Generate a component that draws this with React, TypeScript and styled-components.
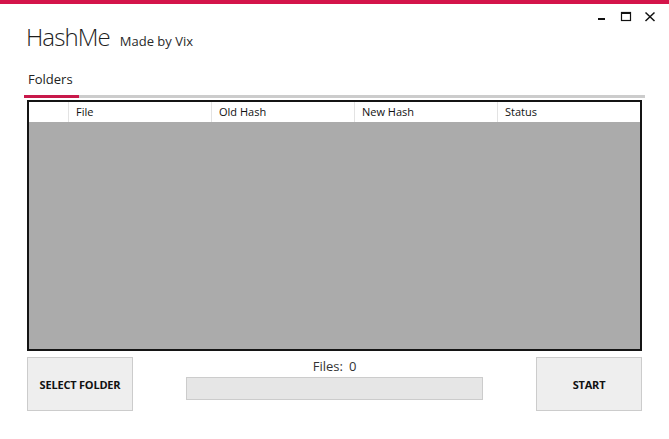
import styled, { createGlobalStyle } from 'styled-components';

const GlobalStyle = createGlobalStyle`
  html, body {
    margin: 0;
    padding: 0;
    background: #ffffff;
  }

  body {
    font-family: "Open Sans", "Noto Sans", sans-serif;
    color: #1b1b1b;
  }
`;

const columns = ['File', 'Old Hash', 'New Hash', 'Status'];

export default function App() {
    return (
        <>
            <GlobalStyle />
            <Window>
                <Header>
                    <TitleGroup>
                        <Title>HashMe</Title>
                        <Subtitle>Made by Vix</Subtitle>
                    </TitleGroup>

                    <Controls>
                        <ControlButton aria-label="minimize">
                            <svg width="12" height="12" viewBox="0 0 12 12">
                                <rect x="2" y="7" width="7" height="2" fill="#111" />
                            </svg>
                        </ControlButton>
                        <ControlButton aria-label="maximize">
                            <svg width="12" height="12" viewBox="0 0 12 12">
                                <rect x="1.5" y="1.5" width="9" height="8" fill="none" stroke="#111" strokeWidth="1.2" />
                                <rect x="1" y="1" width="10" height="2" fill="#111" />
                            </svg>
                        </ControlButton>
                        <ControlButton aria-label="close">
                            <svg width="12" height="12" viewBox="0 0 12 12">
                                <path d="M1.5 1.5 L10.5 10 M10.5 1.5 L1.5 10" stroke="#111" strokeWidth="1.5" />
                            </svg>
                        </ControlButton>
                    </Controls>
                </Header>

                <Tabs>
                    <TabLabel>Folders</TabLabel>
                    <TabTrack>
                        <TabIndicator />
                    </TabTrack>
                </Tabs>

                <Grid>
                    <GridHeader>
                        <RowHeaderCell />
                        {columns.map((c) => (
                            <HeaderCell key={c}>{c}</HeaderCell>
                        ))}
                    </GridHeader>
                    <GridBody />
                </Grid>

                <Footer>
                    <ActionButton>SELECT FOLDER</ActionButton>

                    <Progress>
                        <Counter>
                            Files:<CounterValue>0</CounterValue>
                        </Counter>
                        <ProgressBar />
                    </Progress>

                    <ActionButton>START</ActionButton>
                </Footer>
            </Window>
        </>
    );
}

const Window = styled.div`
  width: 669px;
  height: 439px;
  box-sizing: border-box;
  border-top: 4px solid #d4144a;
  display: flex;
  flex-direction: column;
  background: #ffffff;
`;

const Header = styled.div`
  display: flex;
  justify-content: space-between;
  align-items: flex-start;
  height: 62px;
`;

const TitleGroup = styled.div`
  display: flex;
  align-items: baseline;
  gap: 10px;
  padding-left: 26px;
  margin-top: 18px;
`;

const Title = styled.h1`
  margin: 0;
  font-size: 24px;
  font-weight: 300;
  line-height: 30px;
  letter-spacing: -0.9px;
  color: #1e1e1e;
`;

const Subtitle = styled.span`
  font-size: 13px;
  color: #2a2a2a;
`;

const Controls = styled.div`
  display: flex;
  gap: 10px;
  margin-top: 6px;
  padding-right: 12px;
`;

const ControlButton = styled.div`
  width: 14px;
  height: 14px;
  display: flex;
  align-items: center;
  justify-content: center;
`;

const Tabs = styled.div`
  display: flex;
  flex-direction: column;
  padding: 0 24px;
`;

const TabLabel = styled.div`
  box-sizing: border-box;
  height: 29px;
  padding: 4px 0 0 4px;
  font-size: 13px;
  line-height: 18px;
  color: #222;
`;

const TabTrack = styled.div`
  height: 3px;
  background: #cccccc;
  display: flex;
`;

const TabIndicator = styled.div`
  width: 55px;
  background: #c8184a;
`;

const Grid = styled.div`
  margin: 2px 27px 0;
  height: 251px;
  box-sizing: border-box;
  border: 2px solid #141414;
  display: flex;
  flex-direction: column;
  background: #ababab;
`;

const GridHeader = styled.div`
  display: grid;
  grid-template-columns: 39px repeat(4, 1fr);
  height: 20px;
  background: #ffffff;
`;

const RowHeaderCell = styled.div`
  background: #ffffff;
`;

const HeaderCell = styled.div`
  border-left: 1px solid #e3e3e3;
  padding-left: 7px;
  font-size: 11px;
  line-height: 20px;
  color: #111;
`;

const GridBody = styled.div`
  flex: 1;
`;

const Footer = styled.div`
  display: grid;
  grid-template-columns: 106px 1fr 106px;
  padding: 0 27px;
  margin-top: 6px;
`;

const ActionButton = styled.button`
  height: 54px;
  border: 1px solid #cccccc;
  background: #eeeeee;
  font-family: "Open Sans", "Noto Sans", sans-serif;
  font-size: 11px;
  font-weight: 700;
  color: #111;
  padding: 0;
  letter-spacing: -0.2px;
`;

const Progress = styled.div`
  display: flex;
  flex-direction: column;
  align-items: center;
`;

const Counter = styled.div`
  font-size: 13px;
  line-height: 18px;
  color: #333;
`;

const CounterValue = styled.span`
  margin-left: 6px;
`;

const ProgressBar = styled.div`
  margin-top: 2px;
  width: 297px;
  height: 23px;
  box-sizing: border-box;
  border: 1px solid #cccccc;
  background: #e6e6e6;
`;
